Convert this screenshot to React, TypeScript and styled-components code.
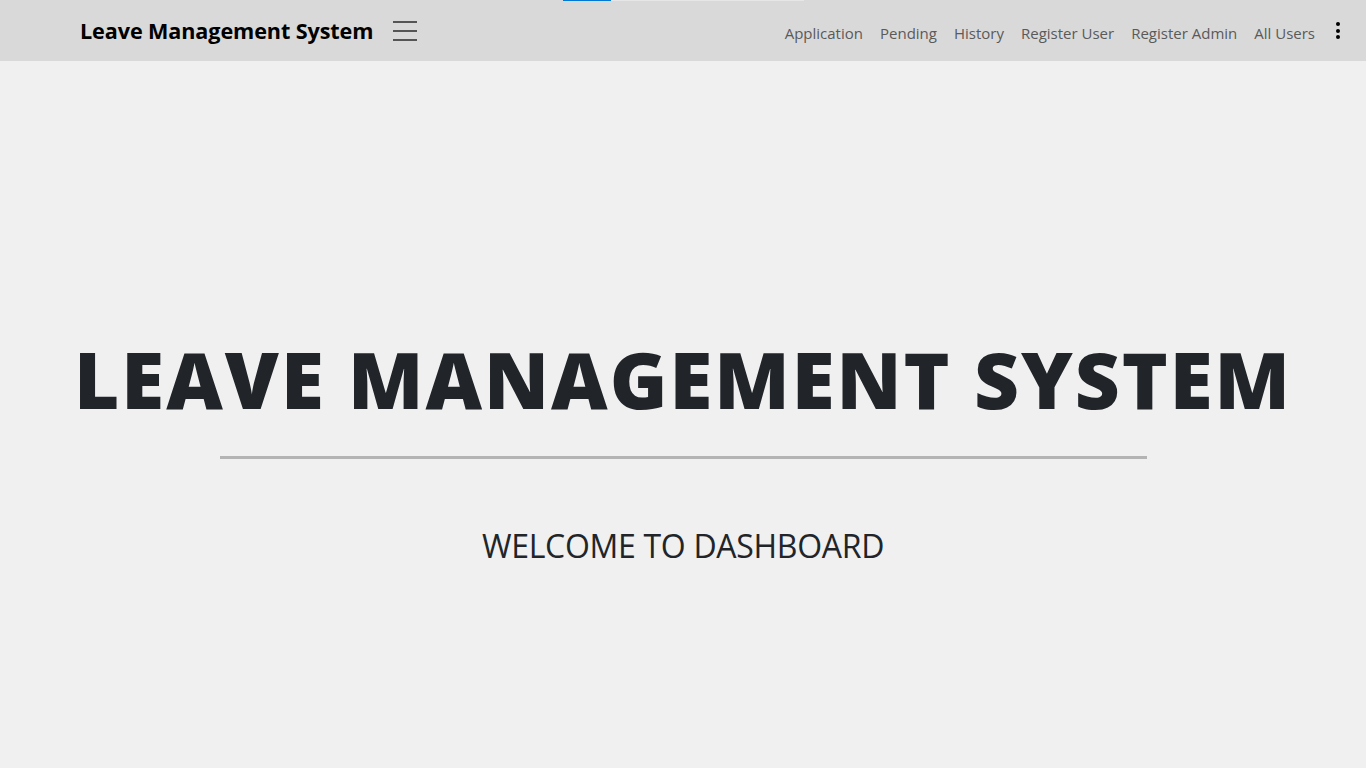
import React from 'react';
import styled, { createGlobalStyle } from 'styled-components';

const GlobalStyle = createGlobalStyle`
  html, body {
    margin: 0;
    padding: 0;
    background: #f0f0f0;
    font-family: "Open Sans", "Noto Sans", sans-serif;
  }
  * {
    box-sizing: border-box;
  }
`;

const Page = styled.div`
  min-height: 768px;
  display: flex;
  flex-direction: column;
`;

const Navbar = styled.header`
  position: relative;
  height: 61px;
  background: #d9d9d9;
  display: flex;
  align-items: center;
  padding: 0 22px 0 80px;
`;

const Progress = styled.div`
  position: absolute;
  top: 0;
  left: 563px;
  width: 241px;
  height: 1px;
  background: #e6e6e6;

  &::before {
    content: '';
    display: block;
    width: 48px;
    height: 100%;
    background: #0078d4;
  }
`;

const Brand = styled.div`
  font-size: 21.6px;
  font-weight: 700;
  color: #000;
  letter-spacing: -0.1px;
`;

const Burger = styled.button`
  margin-left: 20px;
  width: 24px;
  height: 20px;
  padding: 0;
  border: none;
  background: none;
  display: flex;
  flex-direction: column;
  justify-content: space-between;

  span {
    display: block;
    height: 2px;
    background: #555;
  }
`;

const NavLinks = styled.nav`
  margin-left: auto;
  display: flex;
  align-items: center;
  gap: 17px;
  padding-top: 4px;
`;

const NavLink = styled.a`
  font-size: 15px;
  color: #5a5a5a;
  text-decoration: none;
`;

const Kebab = styled.div`
  width: 12px;
  display: flex;
  flex-direction: column;
  align-items: center;
  gap: 2.5px;
  margin-top: -4px;

  span {
    width: 4px;
    height: 4px;
    border-radius: 50%;
    background: #000;
  }
`;

const Hero = styled.main`
  flex: 1;
  display: flex;
  flex-direction: column;
  align-items: center;
  padding-top: 279px;
`;

const Title = styled.h1`
  margin: 0;
  font-size: 78px;
  font-weight: 800;
  line-height: 1;
  color: #212529;
  letter-spacing: 2px;
`;

const Divider = styled.hr`
  width: 927px;
  margin: 38px 0 0;
  border: none;
  height: 3px;
  background: #b4b4b4;
`;

const Welcome = styled.h2`
  margin: 65px 0 0;
  font-size: 32px;
  font-weight: 500;
  color: #212529;
  letter-spacing: -0.3px;
`;

const links = ['Application', 'Pending', 'History', 'Register User', 'Register Admin', 'All Users'];

export default function App() {
  return (
    <Page>
      <GlobalStyle />
      <Navbar>
        <Progress />
        <Brand>Leave Management System</Brand>
        <Burger aria-label="menu">
          <span />
          <span />
          <span />
        </Burger>
        <NavLinks>
          {links.map((l) => (
            <NavLink key={l} href="#">
              {l}
            </NavLink>
          ))}
          <Kebab>
            <span />
            <span />
            <span />
          </Kebab>
        </NavLinks>
      </Navbar>
      <Hero>
        <Title>LEAVE MANAGEMENT SYSTEM</Title>
        <Divider />
        <Welcome>WELCOME TO DASHBOARD</Welcome>
      </Hero>
    </Page>
  );
}
